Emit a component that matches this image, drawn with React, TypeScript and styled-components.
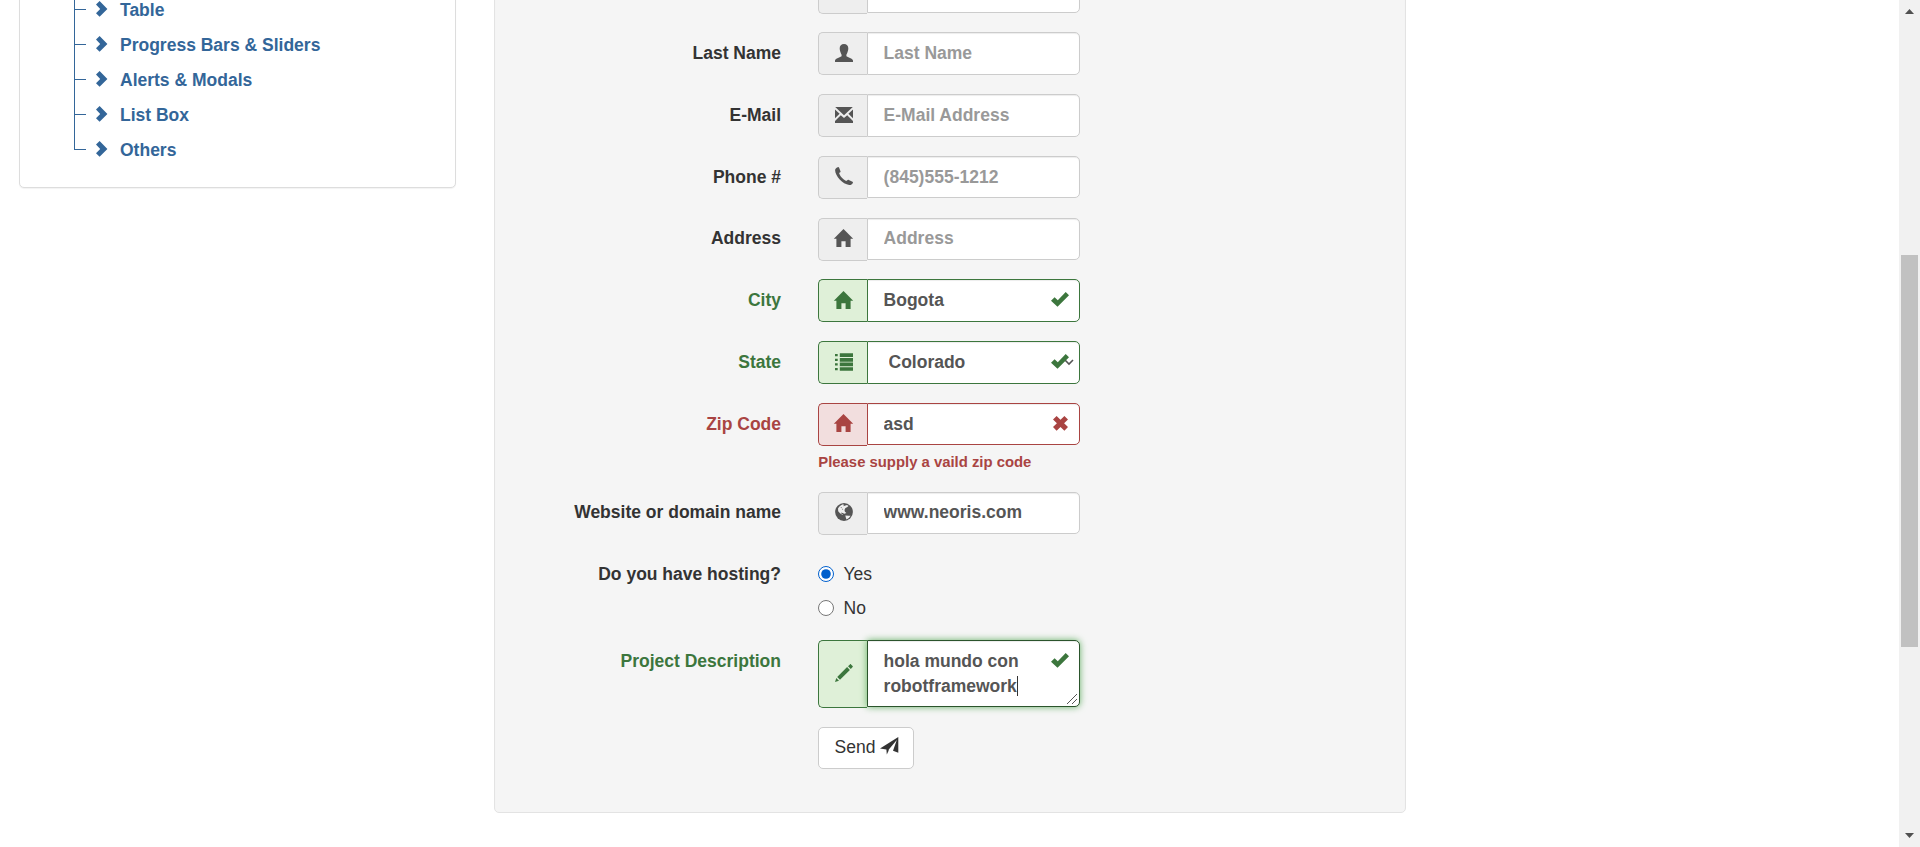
import React from "react";
import styled, { createGlobalStyle } from "styled-components";

const GlobalStyle = createGlobalStyle`
  *, *::before, *::after { box-sizing: border-box; }
  html, body { margin: 0; padding: 0; background: #fff; overflow: hidden; }
  body { font: 17.5px/25px "Liberation Sans", Arial, sans-serif; color: #333; }
`;

type Status = "plain" | "success" | "error";
const tones = {
  plain: { line: "#ccc", fill: "#eee", icon: "#555", label: "#333" },
  success: { line: "#3c763d", fill: "#dff0d8", icon: "#3c763d", label: "#3c763d" },
  error: { line: "#a94442", fill: "#f2dede", icon: "#a94442", label: "#a94442" },
};

const Page = styled.div`
  display: flex;
  height: 847px;
  overflow: hidden;
`;
const Content = styled.div`
  flex: 1;
  display: flex;
  align-items: flex-start;
  gap: 38px;
  padding-left: 19px;
`;
const Sidebar = styled.nav`
  width: 437px;
  height: 208px;
  margin-top: -20px;
  padding: 11px 0 0 55px;
  background: #fff;
  border: 1px solid #ddd;
  border-radius: 5px;
  box-shadow: 0 1px 1px rgba(0, 0, 0, 0.05);
`;
const Tree = styled.ul`
  margin: 0;
  padding: 0;
  list-style: none;
`;
const TreeItem = styled.li`
  display: flex;
  align-items: center;
  height: 35px;
  margin-left: -1px;
  color: #336699;
  font-weight: bold;
  svg { margin: 0 12px 1px 10px; }
`;
const TreeText = styled.span`
  padding-top: 2px;
`;
const Branch = styled.span<{ $last: boolean }>`
  display: grid;
  grid-template-rows: 18px 17px;
  width: 12px;
  height: 35px;
  &::before { content: ""; border-left: 1px solid #336699; border-bottom: 1px solid #336699; }
  &::after { content: ""; border-left: 1px solid ${(p) => (p.$last ? "transparent" : "#336699")}; }
`;

const Well = styled.form`
  width: 912px;
  height: 853px;
  margin-top: -40px;
  padding: 9.55px 0 0 0;
  background: #f5f5f5;
  border: 1px solid #e3e3e3;
  border-radius: 5px;
  box-shadow: inset 0 1px 1px rgba(0, 0, 0, 0.05);
`;
const Row = styled.div`
  display: grid;
  grid-template-columns: 286px 262px;
  column-gap: 37px;
  margin-bottom: 18.75px;
`;
const Label = styled.label<{ $status: Status; $drop?: boolean }>`
  padding-top: ${(p) => (p.$drop ? "9.5px" : "8.75px")};
  text-align: right;
  font-weight: bold;
  color: ${(p) => tones[p.$status].label};
`;
const Group = styled.div<{ $tall?: boolean }>`
  position: relative;
  display: flex;
  align-items: flex-start;
  height: ${(p) => (p.$tall ? "68px" : "43px")};
`;
const Addon = styled.span<{ $status: Status }>`
  display: flex;
  align-items: center;
  justify-content: center;
  width: 49px;
  height: 100%;
  padding: 0 0 2px 1.5px;
  border: 1px solid ${(p) => tones[p.$status].line};
  border-right: 0;
  border-radius: 5px 0 0 5px;
  background: ${(p) => tones[p.$status].fill};
  color: ${(p) => tones[p.$status].icon};
`;
const Input = styled.input<{ $status: Status }>`
  width: 213px;
  height: 42.5px;
  padding: 7.5px 15px 7.5px 15.6px;
  border: 1px solid ${(p) => tones[p.$status].line};
  border-radius: 0 5px 5px 0;
  background: #fff;
  box-shadow: inset 0 1px 1px rgba(0, 0, 0, 0.075);
  color: #555;
  font: bold 17.5px/25px "Liberation Sans", Arial, sans-serif;
  outline: none;
  &::placeholder { color: #999; opacity: 1; }
`;
const Picker = styled(Input).attrs({ as: "select" })`
  appearance: none;
  padding-left: 20.5px;
`;
const Area = styled.div`
  width: 213px;
  height: 67px;
  padding: 8.3px 15px 0 15.6px;
  border: 1px solid #2b542c;
  border-radius: 0 5px 5px 0;
  background: #fff;
  box-shadow: inset 0 1px 1px rgba(0, 0, 0, 0.075), 0 0 7.5px #67b168;
  color: #555;
  font-weight: bold;
`;
const Caret = styled.span`
  display: inline-block;
  width: 1px;
  height: 20px;
  vertical-align: -4px;
  background: #333;
`;
const Feedback = styled.span<{ $color: string }>`
  position: absolute;
  top: 0;
  right: 0;
  display: flex;
  align-items: center;
  justify-content: center;
  width: 40px;
  height: 41px;
  color: ${(p) => p.$color};
`;
const SelectArrow = styled.svg`
  position: absolute;
  right: 6px;
  top: 16px;
`;
const Grip = styled.svg`
  position: absolute;
  right: 3px;
  bottom: 4px;
`;
const Help = styled.small`
  display: block;
  height: 27.1px;
  padding-top: 6px;
  padding-left: 0.3px;
  line-height: 21px;
  font-size: 14.875px;
  font-weight: bold;
  color: #a94442;
  white-space: nowrap;
`;
const Radios = styled.div`
  height: 67.5px;
  padding-top: 8.75px;
`;
const RadioLabel = styled.label`
  display: flex;
  align-items: center;
  height: 25px;
  margin-bottom: 9px;
`;
const Radio = styled.input`
  width: 16px;
  height: 16px;
  margin: 0 10px 1px -0.5px;
  accent-color: #005fcc;
`;
const Send = styled.button`
  display: flex;
  align-items: center;
  gap: 5px;
  width: 96px;
  height: 42px;
  margin-top: 0.8px;
  padding: 0 0 1.5px 15.5px;
  border: 1px solid #ccc;
  border-radius: 5px;
  background: #fff;
  color: #333;
  font: 17.5px/25px "Liberation Sans", Arial, sans-serif;
  svg { margin-bottom: 2px; flex: none; }
`;

const Scrollbar = styled.div`
  display: flex;
  flex-direction: column;
  align-items: center;
  width: 21px;
  background: #f1f1f1;
`;
const Thumb = styled.div`
  width: 17px;
  height: 392px;
  margin: 241px 0 185px;
  background: #c1c1c1;
`;

const glyphs = {
  user: "M9 0c2.700 0 4.300 1.700 4.300 4.300 0 2.200-.6 3.200-.9 4.200-.3 1-1 1.900-1 2.400v1c.3 1.200 5.600 1.700 6.600 4.600V18H0v-1.500c1-2.900 6.300-3.400 6.600-4.600v-1c0-.5-.7-1.400-1-2.400-.3-1-.9-2-.9-4.200C4.700 1.700 6.300 0 9 0z",
  mail: "M.2 1h17.600L9 9.300zM0 3.400l4.600 4.400L0 12.300zM18 3.400v8.900L13.400 7.800zM5.800 9.200l3.200 2.900 3.200-2.900L18 15v2H0v-2z",
  phone: "M2.700.2c.7-.3 1-.1 1.300.4l1.500 3.600c.2.500.1.800-.3 1.100L4.100 6.100c.7 2.800 3.900 6.600 7.100 7.900l1.500-1c.4-.3.7-.3 1.100-.1l3.700 1.800c.6.300.6.700.3 1.200-.9 1.500-2 2.200-3.600 2C7.600 17.300.2 8.800.1 3.200.1 1.900 1.200.9 2.700.2z",
  home: "M9.500 0L19.200 9.800h-2.600V18h-5v-5.700H7.400V18h-5V9.800H-.2z",
  list: "M0 1h2.700v2.300H0zM4.800 .2h13.200v3.900H4.800zM0 5.800h2.700v2.300H0zM4.800 5h13.200v3.700H4.800zM0 10.300h2.700v2.300H0zM4.800 9.600h13.200v3.700H4.800zM0 15h2.700v2.300H0zM4.800 14.200h13.200v3.600H4.800z",
  pencil: "M0 18l1.300-4 2.700 2.700zM2.200 13L12.100 3.100l2.800 2.800L5 15.800zM13 2.200L14.900.4c.4-.4.700-.4 1.100 0l1.600 1.600c.4.4.4.700 0 1.100L15.800 5z",
  check: "M0 8.800L3.600 5.200 6.800 8.300 14.700 0 18 3.300 6.500 14.800z",
  remove: "M3.600 0L7.500 3.800 11.400 0 15 3.500 11.100 7.300 15 11.100 11.400 14.700 7.500 10.900 3.600 14.700 0 11.100 3.900 7.300 0 3.500z",
  chevron: "M3.600 0L11.400 7.900 3.600 15.800 0 12.200 4.200 7.900 0 3.600z",
  send: "M18.300 0v15.800l-5.300-2L16.800 2.900 8.800 12.600 8.600 13.300v.4L6.800 17.500 6.400 12.500 0 11.500z",
};
const Glyph = ({ name, w = 18, h = 18 }: { name: keyof typeof glyphs; w?: number; h?: number }) => (
  <svg width={w} height={h} viewBox={`0 0 ${w} ${h}`} fill="currentColor" overflow="visible">
    <path d={glyphs[name]} />
  </svg>
);
const Globe = () => (
  <svg width="18" height="18" viewBox="0 0 18 18">
    <circle cx="9" cy="9" r="8.900" fill="#555" />
    <path d="M6 2.200L8 1.300l1 .8-.8 1.200 1.500-.6 2.300-.7 1.500 1-1.500 1.300-1.600.8-.9 2 .4 1.600 1.500 1.200-2.100.9-1.700-.9-1.400-.4.4 1.400 1.500.7-.5.500L5 10.300 3.200 8.300 3 5.500 4.200 3.700zM10.300 12.500l3.600.3 1.700 0-1.700 2.200-2.400 1.500-.7-1.900z" fill="#eee" />
    <path d="M5.500 4.500l1.300-.5-.5 1.300zM7.300 5.600l.9.600-.8.700z" fill="#555" />
  </svg>
);

type FieldProps = {
  label: string;
  icon: React.ReactNode;
  value?: string;
  placeholder?: string;
  status?: Status;
  help?: string;
  select?: boolean;
};
const Field = ({ label, icon, value = "", placeholder, status = "plain", help, select }: FieldProps) => (
  <Row>
    <Label $status={status}>{label}</Label>
    <div>
      <Group>
        <Addon $status={status}>{icon}</Addon>
        {select ? (
          <Picker $status={status}>
            {React.createElement("option", null, value)}
          </Picker>
        ) : (
          <Input $status={status} placeholder={placeholder} value={value} readOnly />
        )}
        {select && (
          <SelectArrow width="10" height="10" viewBox="0 0 10 10" fill="none" stroke="#555" strokeWidth="1.600">
            <path d="M1 3l4 4 4-4" />
          </SelectArrow>
        )}
        {status === "success" && (
          <Feedback $color="#3c763d"><Glyph name="check" h={15} /></Feedback>
        )}
        {status === "error" && (
          <Feedback $color="#a94442"><Glyph name="remove" w={15} h={15} /></Feedback>
        )}
      </Group>
      {help && <Help>{help}</Help>}
    </div>
  </Row>
);

const links = ["Table", "Progress Bars & Sliders", "Alerts & Modals", "List Box", "Others"];

export default function App() {
  return (
    <Page>
      <GlobalStyle />
      <Content>
        <Sidebar>
          <Tree>
            {links.map((text, i) => (
              <TreeItem key={text}>
                <Branch $last={i === links.length - 1} />
                <Glyph name="chevron" w={12} h={16} />
                <TreeText>{text}</TreeText>
              </TreeItem>
            ))}
          </Tree>
        </Sidebar>
        <Well>
          <Field label="" icon={null} />
          <Field label="Last Name" icon={<Glyph name="user" />} placeholder="Last Name" />
          <Field label="E-Mail" icon={<Glyph name="mail" />} placeholder="E-Mail Address" />
          <Field label="Phone #" icon={<Glyph name="phone" />} placeholder="(845)555-1212" />
          <Field label="Address" icon={<Glyph name="home" w={19} />} placeholder="Address" />
          <Field label="City" icon={<Glyph name="home" w={19} />} value="Bogota" status="success" />
          <Field label="State" icon={<Glyph name="list" />} value="Colorado" status="success" select />
          <Field
            label="Zip Code"
            icon={<Glyph name="home" w={19} />}
            value="asd"
            status="error"
            help="Please supply a vaild zip code"
          />
          <Field label="Website or domain name" icon={<Globe />} value="www.neoris.com" />
          <Row>
            <Label $status="plain">Do you have hosting?</Label>
            <Radios>
              <RadioLabel><Radio type="radio" name="hosting" defaultChecked />Yes</RadioLabel>
              <RadioLabel><Radio type="radio" name="hosting" />No</RadioLabel>
            </Radios>
          </Row>
          <Row>
            <Label $status="success" $drop>Project Description</Label>
            <Group $tall>
              <Addon $status="success"><Glyph name="pencil" /></Addon>
              <Area>
                hola mundo con
                <br />
                robotframework<Caret />
              </Area>
              <Feedback $color="#3c763d"><Glyph name="check" h={15} /></Feedback>
              <Grip width="10" height="10" viewBox="0 0 10 10" stroke="#555" strokeWidth="1">
                <path d="M0 10L10 0M5 10L10 5" />
              </Grip>
            </Group>
          </Row>
          <Row>
            <span />
            <Send type="button">Send <Glyph name="send" /></Send>
          </Row>
        </Well>
      </Content>
      <Scrollbar>
        <svg width="21" height="14" fill="#505050"><path d="M6 14h9l-4.500-5z" /></svg>
        <Thumb />
        <svg width="21" height="15" fill="#505050"><path d="M6 1h9l-4.500 5z" /></svg>
      </Scrollbar>
    </Page>
  );
}
